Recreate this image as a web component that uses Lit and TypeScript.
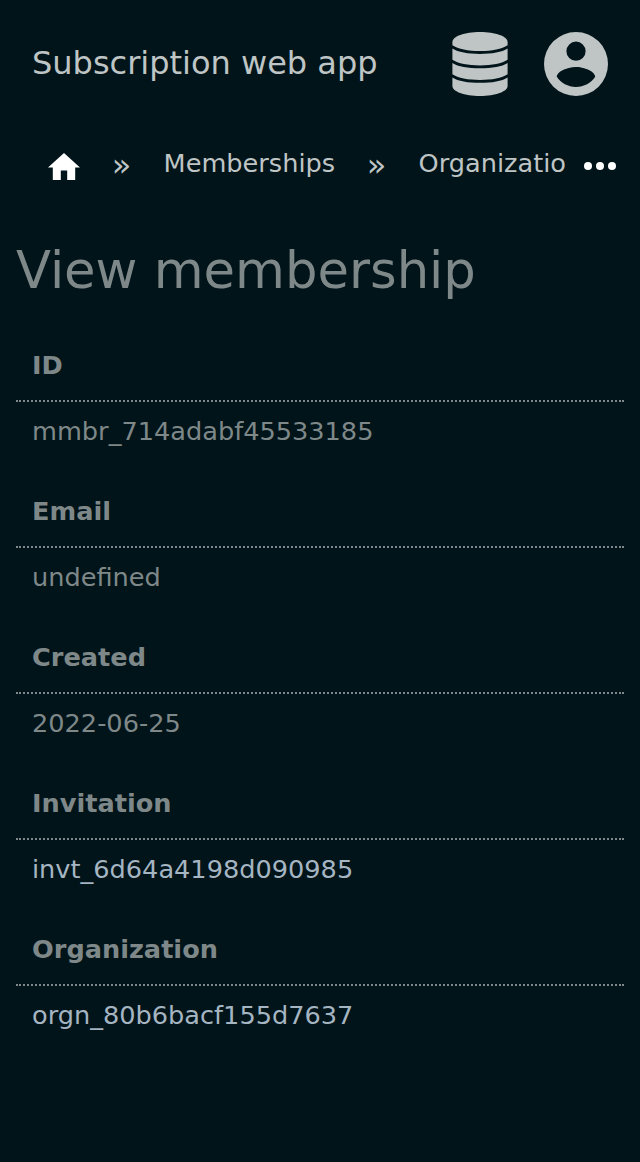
import { LitElement, html, css, svg } from "lit";
import { customElement, property } from "lit/decorators.js";

const icons = {
  database: svg`<path d="M.4 10C.4 4.4 12.5 0 28 0S55.6 4.4 55.6 10V13.2C50 17 40 19.1 28 19.1S6 17 .4 13.2Z"/><path d="M.4 16.6C6 20.4 16 21.9 28 21.9S50 20.4 55.6 16.6V27.7C50 31.4 40 33.4 28 33.4S6 31.4 .4 27.7Z"/><path d="M.4 31C6 34.8 16 36.2 28 36.2S50 34.8 55.6 31V42.2C50 46 40 47.9 28 47.9S6 46 .4 42.2Z"/><path d="M.4 45.4C6 49.2 16 50.7 28 50.7S50 49.2 55.6 45.4V54C55.6 59.6 43.5 64 28 64S.4 59.6 .4 54Z"/>`,
  account: svg`<path d="M12 19.2C9.5 19.2 7.29 17.92 6 16C6.03 14 10 12.9 12 12.9C14 12.9 17.97 14 18 16C16.71 17.92 14.5 19.2 12 19.2M12 5A3 3 0 0 1 15 8A3 3 0 0 1 12 11A3 3 0 0 1 9 8A3 3 0 0 1 12 5M12 2A10 10 0 0 0 2 12A10 10 0 0 0 12 22A10 10 0 0 0 22 12A10 10 0 0 0 12 2Z"/>`,
  home: svg`<path d="M10 20V14H14V20H19V12H22L12 3L2 12H5V20H10Z"/>`,
  more: svg`<circle cx="4" cy="4" r="4"/><circle cx="16" cy="4" r="4"/><circle cx="28" cy="4" r="4"/>`,
};

@customElement("record-field")
class RecordField extends LitElement {
  @property() label = "";
  @property() value = "";
  @property({ type: Boolean }) linked = false;

  static styles = css`
    :host { display: block; height: 146px; }
    .label {
      box-sizing: border-box;
      height: 72px;
      padding: 20px 16px 0;
      border-bottom: 2px dotted #7f898b;
      font-weight: bold;
      line-height: 30px;
    }
    .value { padding: 14px 16px 0; line-height: 30px; }
    .link { color: #a6b5c2; text-decoration: none; }
  `;

  render() {
    return html`
      <div class="label">${this.label}</div>
      <div class="value">
        ${this.linked ? html`<a class="link" href="#">${this.value}</a>` : this.value}
      </div>
    `;
  }
}

@customElement("app-root")
class AppRoot extends LitElement {
  static styles = css`
    :host {
      display: block;
      min-height: 1162px;
      background: #001419;
      color: #7f8889;
      font: 25.6px "DejaVu Sans", sans-serif;
    }
    svg { display: block; fill: currentColor; }
    .header {
      display: flex;
      align-items: center;
      height: 128px;
      padding: 0 32px;
      box-sizing: border-box;
      color: #bfc4c5;
    }
    .title { flex: 1; font-size: 32px; line-height: 38px; padding-bottom: 2px; }
    .account { margin-left: 36px; }
    .crumbs {
      display: flex;
      height: 80px;
      padding: 0 24px 0 48px;
      box-sizing: border-box;
      color: #bfc4c5;
      line-height: 30px;
    }
    .home { color: #fff; margin-top: 24.5px; width: 32px; }
    .sep { width: 83.6px; box-sizing: border-box; padding: 22px 0 0 31.8px; font-size: 32px; }
    .crumb { padding-top: 20px; width: 171.4px; white-space: nowrap; }
    .last { width: 148px; overflow: hidden; }
    .more { color: #fff; margin: 34px 0 0 auto; }
    .heading {
      margin: 0;
      padding: 32px 16px 0;
      height: 122px;
      box-sizing: border-box;
      font-size: 51.2px;
      font-weight: normal;
      line-height: 60px;
    }
    .fields { padding: 0 16px; }
  `;

  fields = [
    { label: "ID", value: "mmbr_714adabf45533185" },
    { label: "Email", value: "undefined" },
    { label: "Created", value: "2022-06-25" },
    { label: "Invitation", value: "invt_6d64a4198d090985", linked: true },
    { label: "Organization", value: "orgn_80b6bacf155d7637", linked: true },
  ];

  render() {
    return html`
      <header class="header">
        <div class="title">Subscription web app</div>
        <svg width="56" height="64" viewBox="0 0 56 64">${icons.database}</svg>
        <svg class="account" width="64" height="64" viewBox="2 2 20 20">${icons.account}</svg>
      </header>
      <nav class="crumbs">
        <svg class="home" width="32" height="27.2" viewBox="2 3 20 17">${icons.home}</svg>
        <span class="sep">»</span>
        <span class="crumb">Memberships</span>
        <span class="sep">»</span>
        <span class="crumb last">Organizatio</span>
        <svg class="more" width="32" height="8" viewBox="0 0 32 8">${icons.more}</svg>
      </nav>
      <main>
        <h1 class="heading">View membership</h1>
        <div class="fields">
          ${this.fields.map(
            (f) => html`<record-field .label=${f.label} .value=${f.value} .linked=${!!f.linked}></record-field>`
          )}
        </div>
      </main>
    `;
  }
}
